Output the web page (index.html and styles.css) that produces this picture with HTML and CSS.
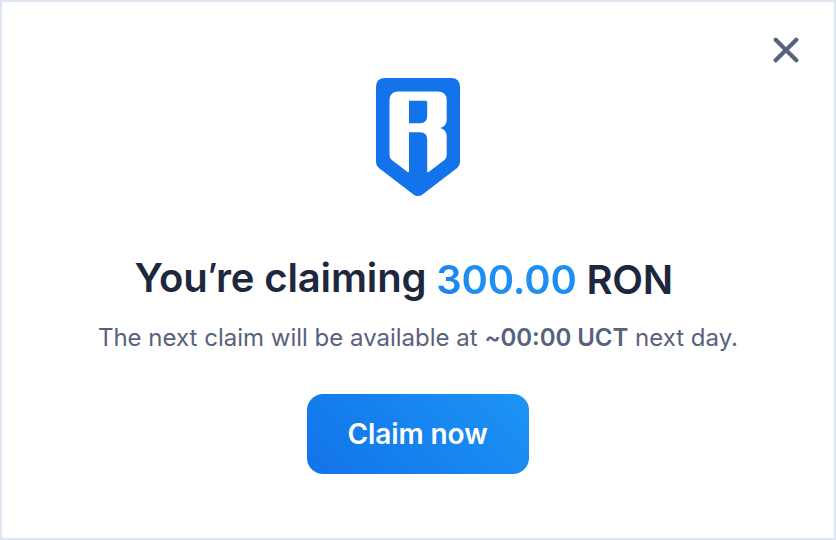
FILE: index.html
```html
<!DOCTYPE html>
<html lang="en">
<head>
<meta charset="utf-8">
<title>Claim RON</title>
<link rel="stylesheet" href="styles.css">
</head>
<body>
<main class="dialog">
  <button class="close" aria-label="Close">
    <svg width="26" height="26" viewBox="0 0 26 26"><path d="M2.7 2.7 23.3 23.3M23.3 2.7 2.7 23.3"/></svg>
  </button>
  <svg class="logo" width="84" height="118" viewBox="0 0 84 118">
    <path class="shield" d="M9 0H75Q84 0 84 9V83.500Q84 87.500 80.800 90.200L46.500 116.500Q42 119.500 37.500 116.500L3.200 90.200Q0 87.500 0 83.500V9Q0 0 9 0Z"/>
    <path class="mark" fill-rule="evenodd" d="M22.500 13.500H61.700Q70.700 13.500 70.700 22.500V41.500C70.700 46.500 68 49.300 63.500 50C68 50.700 70.700 53.500 70.700 58.500V77Q70.700 80 68.400 82L52.300 94.200Q51.200 94.700 51.200 93.300V61.500Q51.200 54.300 44 54.300H33V93.300Q33 94.700 31.900 94.200L15.800 82Q13.500 80 13.500 77V22.500Q13.500 13.500 22.500 13.500ZM33 22.700V45.300H44Q51.200 45.300 51.200 38.100V24.200Q51.200 22.700 49.700 22.700Z"/>
  </svg>
  <h1 class="title"><span class="lead">You<span class="apostrophe">’</span>re claiming</span><span class="sum"><span class="amount">300.00</span> RON</span></h1>
  <p class="note">The next claim will be available at <strong>~00<span class="colon">:</span>00 UCT</strong> next day.</p>
  <button class="claim">Claim now</button>
</main>
</body>
</html>
```
FILE: styles.css
```css
* { box-sizing: border-box; margin: 0; }
body { font-family: Inter, "Liberation Sans", sans-serif; background: #fff; }
button { border: 0; padding: 0; font: inherit; }
.dialog {
  position: relative;
  width: 836px;
  height: 540px;
  border: 2px solid #dce6f3;
  padding-top: 76px;
  display: flex;
  flex-direction: column;
  align-items: center;
}
.close { position: absolute; top: 35px; right: 35px; width: 26px; height: 26px; background: none; }
.close svg, .logo { display: block; }
.close path { stroke: #57627d; stroke-width: 4.2; stroke-linecap: round; }
.shield { fill: #1273ea; }
.mark { fill: #fff; }
.title {
  display: flex;
  gap: 10px;
  align-self: flex-start;
  margin: 58px 0 0 132.5px;
  font-size: 40px;
  line-height: 48px;
  font-weight: 600;
  color: #1d273d;
  white-space: nowrap;
}
.lead { letter-spacing: -0.13px; }
.apostrophe {
  font-size: 33px;
  line-height: 1;
  vertical-align: 5px;
  letter-spacing: -1.4px;
}
.sum { padding-top: 2px; letter-spacing: -0.22px; }
.amount {
  background: linear-gradient(90deg, #1a82ee, #1c8ef4 25%, #1c8ef4);
  -webkit-background-clip: text;
  background-clip: text;
  color: transparent;
}
.note {
  margin-top: 18px;
  font-size: 24px;
  line-height: 32px;
  color: #57627d;
  white-space: nowrap;
}
.note strong { font-weight: 600; letter-spacing: -0.05px; }
.colon { line-height: 1; vertical-align: 1px; }
.claim {
  margin-top: 40px;
  width: 222px;
  height: 80px;
  flex-shrink: 0;
  border-radius: 16px;
  background: linear-gradient(45deg, #1273ea, #1c94f4);
  color: #fff;
  font-size: 28px;
  font-weight: 600;
  letter-spacing: -0.08px;
  padding-right: 1px;
}
```
